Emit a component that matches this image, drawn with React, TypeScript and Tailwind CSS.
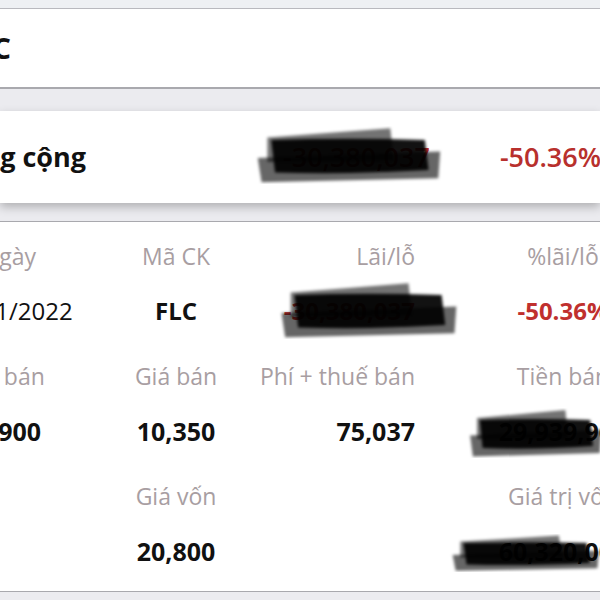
const FONT = { fontFamily: '"Open Sans", "Noto Sans", sans-serif' };

const LABEL = 'text-[23px] leading-none text-[#a89ea2]';
const VALUE = 'text-[25px] leading-none font-bold text-[#111111]';

type Cell = { text: string; cls: string };

// one label row + one value row, four columns (col 3 is right-aligned)
function Block({ labels, values }: { labels: Cell[]; values: Cell[] }) {
  const align = ['justify-center', 'justify-center', 'justify-end', 'justify-center'];
  return (
    <div className="grid grid-cols-[218px_116px_181px_296px] gap-y-[11px]">
      {labels.map((c, i) => (
        <div key={`l${i}`} className={`flex h-[44px] items-center whitespace-nowrap ${align[i]} ${c.cls}`}>
          {c.text}
        </div>
      ))}
      {values.map((c, i) => (
        <div key={`v${i}`} className={`flex h-[44px] items-center whitespace-nowrap ${align[i]} ${c.cls}`}>
          {c.text}
        </div>
      ))}
    </div>
  );
}

// marker scribble used to hide numbers
function Scribble({ w, h, className }: { w: number; h: number; className: string }) {
  const id = `blur${w}${h}`;
  return (
    <svg width={w} height={h} viewBox={`0 0 ${w} ${h}`} className={`pointer-events-none absolute ${className}`} aria-hidden="true">
      <defs>
        <filter id={id}>
          <feGaussianBlur stdDeviation="1.4" />
        </filter>
      </defs>
      <g filter={`url(#${id})`}>
        <path d={`M${w * 0.08} ${h * 0.2} L${w * 0.72} ${h * 0.04} L${w * 0.74} ${h * 0.6} L${w * 0.08} ${h * 0.62} Z`} fill="#000" opacity="0.55" />
        <path d={`M${w * 0.03} ${h * 0.55} L${w * 0.98} ${h * 0.44} L${w * 0.97} ${h * 0.9} L${w * 0.05} ${h * 0.97} Z`} fill="#000" opacity="0.6" />
        <path d={`M${w * 0.1} ${h * 0.24} Q${w * 0.5} ${h * 0.2} ${w * 0.9} ${h * 0.24} L${w * 0.92} ${h * 0.76} Q${w * 0.5} ${h * 0.84} ${w * 0.12} ${h * 0.8} Z`} fill="#050505" opacity="0.93" />
      </g>
    </svg>
  );
}

export default function App() {
  return (
    <div className="relative h-[600px] w-[600px] overflow-hidden bg-[#ececf0]" style={FONT}>
      <div className="h-[8px] bg-[#eef0f3]" />
      {/* header with stock symbol */}
      <div className="flex h-[81px] items-center border-t border-b-2 border-t-[#b9b9be] border-b-[#a9a9ae] bg-white">
        <div className="flex w-[11px] justify-end whitespace-nowrap text-[29px] font-bold text-[#111]">FLC</div>
      </div>
      <div className="h-[22px] bg-[#ebebef]" />

      {/* total card */}
      <div className="relative z-10 flex h-[92px] items-center bg-white shadow-[0_4px_9px_rgba(0,0,0,0.25)]">
        <div className="flex w-[86px] justify-end whitespace-nowrap text-[27px] font-bold text-[#111]">Tổng cộng</div>
        <div className="ml-[197px] whitespace-nowrap text-[27px] font-semibold text-[#c0302e]">-30,380,037</div>
        <div className="ml-[70px] whitespace-nowrap text-[27px] font-semibold text-[#b8302d]">-50.36%</div>
      </div>
      <div className="h-[18px] bg-[#ebebef]" />

      {/* detail table */}
      <div className="h-[371px] overflow-hidden border-y border-[#a9a9ae] bg-white">
        <div className="-ml-[100px] flex flex-col gap-[21px] pt-[12px]">
          <Block
            labels={[
              { text: 'Ngày', cls: LABEL },
              { text: 'Mã CK', cls: LABEL },
              { text: 'Lãi/lỗ', cls: LABEL },
              { text: '%lãi/lỗ', cls: LABEL },
            ]}
            values={[
              { text: '21/01/2022', cls: 'text-[24px] leading-none text-[#111111]' },
              { text: 'FLC', cls: 'text-[24px] leading-none font-bold text-[#111111]' },
              { text: '-30,380,037', cls: 'text-[24px] leading-none font-bold text-[#c0302e]' },
              { text: '-50.36%', cls: 'text-[24px] leading-none font-bold text-[#c0302e]' },
            ]}
          />
          <Block
            labels={[
              { text: 'SL bán', cls: LABEL },
              { text: 'Giá bán', cls: LABEL },
              { text: 'Phí + thuế bán', cls: LABEL },
              { text: 'Tiền bán', cls: LABEL },
            ]}
            values={[
              { text: '2,900', cls: VALUE },
              { text: '10,350', cls: VALUE },
              { text: '75,037', cls: VALUE },
              { text: '29,939,963', cls: VALUE },
            ]}
          />
          <Block
            labels={[
              { text: '', cls: LABEL },
              { text: 'Giá vốn', cls: LABEL },
              { text: '', cls: LABEL },
              { text: 'Giá trị vốn', cls: LABEL },
            ]}
            values={[
              { text: '', cls: VALUE },
              { text: '20,800', cls: VALUE },
              { text: '', cls: VALUE },
              { text: '60,320,000', cls: VALUE },
            ]}
          />
        </div>
      </div>

      {/* redaction marks */}
      <Scribble w={192} h={58} className="left-[252px] top-[126px] z-20" />
      <Scribble w={184} h={58} className="left-[276px] top-[281px]" />
      <Scribble w={138} h={50} className="left-[466px] top-[408px]" />
      <Scribble w={154} h={38} className="left-[448px] top-[534px]" />
    </div>
  );
}
